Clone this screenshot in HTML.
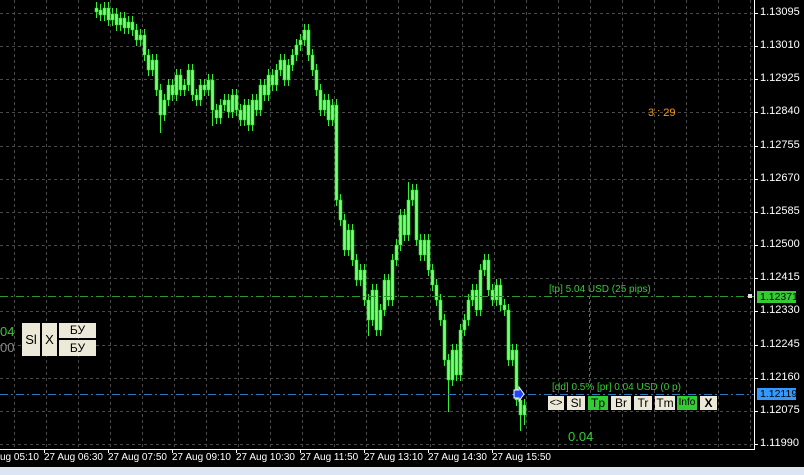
<!DOCTYPE html>
<html><head><meta charset="utf-8"><style>
html,body{margin:0;padding:0;background:#000;width:804px;height:475px;overflow:hidden;font-family:"Liberation Sans","DejaVu Sans",sans-serif;}
#w{position:relative;width:804px;height:475px;}
.t{position:absolute;white-space:nowrap;}
.pl{position:absolute;left:760px;font-size:11px;color:#fff;}
.tl{position:absolute;top:452px;color:#fff;font-size:10px;white-space:nowrap;}
.btn{position:absolute;background:#ece9d8;color:#000;font-size:11px;text-align:center;line-height:14px;height:14px;}
</style></head><body><div id="w">
<svg width="804" height="475" style="position:absolute;left:0;top:0">
<path stroke="#4a4a4a" stroke-dasharray="3,3" fill="none" d="M14.5 0V449M46.5 0V449M78.5 0V449M110.5 0V449M142.5 0V449M174.5 0V449M206.5 0V449M238.5 0V449M270.5 0V449M302.5 0V449M334.5 0V449M366.5 0V449M398.5 0V449M430.5 0V449M462.5 0V449M494.5 0V449M526.5 0V449M558.5 0V449M590.5 0V449M622.5 0V449M654.5 0V449M686.5 0V449M718.5 0V449M750.5 0V449
M0 13.5H754M0 46.5H754M0 79.5H754M0 112.5H754M0 146.5H754M0 179.5H754M0 212.5H754M0 245.5H754M0 278.5H754M0 311.5H754M0 345.5H754M0 378.5H754M0 411.5H754M0 444.5H754"/>
<path stroke="#fff" d="M754 13.5h4M754 46.5h4M754 79.5h4M754 112.5h4M754 146.5h4M754 179.5h4M754 212.5h4M754 245.5h4M754 278.5h4M754 311.5h4M754 345.5h4M754 378.5h4M754 411.5h4M754 444.5h4M44.5 449v4M108.5 449v4M172.5 449v4M236.5 449v4M300.5 449v4M364.5 449v4M428.5 449v4M492.5 449v4"/>
<path stroke="#33ee33" fill="none" d="M96.5 2V18M100.5 4V21M104.5 2V21M108.5 2V26M112.5 8V26M116.5 8V31M120.5 12V31M124.5 12V34M128.5 16V34M132.5 16V36M136.5 24V46M140.5 29V46M144.5 29V61M148.5 49V76M152.5 54V76M156.5 54V96M160.5 84V133M164.5 94V121M168.5 79V106M172.5 79V101M176.5 69V101M180.5 69V96M184.5 79V96M188.5 64V91M192.5 64V101M196.5 89V106M200.5 79V106M204.5 79V96M208.5 74V96M212.5 74V126M216.5 104V124M220.5 99V124M224.5 94V111M228.5 94V118M232.5 89V118M236.5 89V116M240.5 104V126M244.5 99V126M248.5 99V131M252.5 94V131M256.5 94V116M260.5 79V116M264.5 79V101M268.5 69V101M272.5 69V91M276.5 64V91M280.5 54V76M284.5 54V86M288.5 59V86M292.5 49V71M296.5 39V61M300.5 34V51M304.5 24V46M308.5 24V61M312.5 49V76M316.5 64V96M320.5 84V116M324.5 94V116M328.5 94V126M332.5 99V126M336.5 99V206M340.5 194V226M344.5 214V256M348.5 224V256M352.5 224V266M356.5 254V286M360.5 264V286M364.5 264V306M368.5 294V336M372.5 284V326M376.5 284V336M380.5 304V336M384.5 274V316M388.5 274V306M392.5 254V306M396.5 239V266M400.5 209V251M404.5 209V241M408.5 182V241M412.5 184V206M416.5 184V246M420.5 234V261M424.5 234V261M428.5 234V276M432.5 264V291M436.5 279V306M440.5 294V326M444.5 314V366M448.5 354V412M452.5 344V386M456.5 344V381M460.5 324V381M464.5 314V336M468.5 294V326M472.5 284V306M476.5 284V316M480.5 264V316M484.5 254V276M488.5 254V296M492.5 284V306M496.5 279V306M500.5 279V311M504.5 299V316M508.5 304V366M512.5 344V366M516.5 344V406M520.5 394V431M524.5 399V425"/>
<path fill="#77ff77" stroke="#22dd22" stroke-width="0.6" d="M95 8h3V12h-3ZM99 10h3V15h-3ZM103 8h3V15h-3ZM107 8h3V20h-3ZM111 14h3V20h-3ZM115 14h3V25h-3ZM119 18h3V25h-3ZM123 18h3V28h-3ZM127 22h3V28h-3ZM131 22h3V30h-3ZM135 30h3V40h-3ZM139 35h3V40h-3ZM143 35h3V55h-3ZM147 55h3V70h-3ZM151 60h3V70h-3ZM155 60h3V90h-3ZM159 90h3V115h-3ZM163 100h3V115h-3ZM167 85h3V100h-3ZM171 85h3V95h-3ZM175 75h3V95h-3ZM179 75h3V90h-3ZM183 85h3V90h-3ZM187 70h3V85h-3ZM191 70h3V95h-3ZM195 95h3V100h-3ZM199 85h3V100h-3ZM203 85h3V90h-3ZM207 80h3V90h-3ZM211 80h3V110h-3ZM215 110h3V118h-3ZM219 105h3V118h-3ZM223 100h3V105h-3ZM227 100h3V112h-3ZM231 95h3V112h-3ZM235 95h3V110h-3ZM239 110h3V120h-3ZM243 105h3V120h-3ZM247 105h3V125h-3ZM251 100h3V125h-3ZM255 100h3V110h-3ZM259 85h3V110h-3ZM263 85h3V95h-3ZM267 75h3V95h-3ZM271 75h3V85h-3ZM275 70h3V85h-3ZM279 60h3V70h-3ZM283 60h3V80h-3ZM287 65h3V80h-3ZM291 55h3V65h-3ZM295 45h3V55h-3ZM299 40h3V45h-3ZM303 30h3V40h-3ZM307 30h3V55h-3ZM311 55h3V70h-3ZM315 70h3V90h-3ZM319 90h3V110h-3ZM323 100h3V110h-3ZM327 100h3V120h-3ZM331 105h3V120h-3ZM335 105h3V200h-3ZM339 200h3V220h-3ZM343 220h3V250h-3ZM347 230h3V250h-3ZM351 230h3V260h-3ZM355 260h3V280h-3ZM359 270h3V280h-3ZM363 270h3V300h-3ZM367 300h3V320h-3ZM371 290h3V320h-3ZM375 290h3V330h-3ZM379 310h3V330h-3ZM383 280h3V310h-3ZM387 280h3V300h-3ZM391 260h3V300h-3ZM395 245h3V260h-3ZM399 215h3V245h-3ZM403 215h3V235h-3ZM407 200h3V235h-3ZM411 190h3V200h-3ZM415 190h3V240h-3ZM419 240h3V255h-3ZM423 240h3V255h-3ZM427 240h3V270h-3ZM431 270h3V285h-3ZM435 285h3V300h-3ZM439 300h3V320h-3ZM443 320h3V360h-3ZM447 360h3V380h-3ZM451 350h3V380h-3ZM455 350h3V375h-3ZM459 330h3V375h-3ZM463 320h3V330h-3ZM467 300h3V320h-3ZM471 290h3V300h-3ZM475 290h3V310h-3ZM479 270h3V310h-3ZM483 260h3V270h-3ZM487 260h3V290h-3ZM491 290h3V300h-3ZM495 285h3V300h-3ZM499 285h3V305h-3ZM503 305h3V310h-3ZM507 310h3V360h-3ZM511 350h3V360h-3ZM515 350h3V400h-3ZM519 400h3V415h-3ZM523 405h3V415h-3Z"/>
<line x1="0" y1="296.5" x2="754" y2="296.5" stroke="#2a9a2a" stroke-dasharray="8,3,2,3"/>
<line x1="0" y1="394.5" x2="754" y2="394.5" stroke="#2a7ac0" stroke-dasharray="8,3,2,3"/>
<line x1="589.5" y1="296" x2="589.5" y2="386" stroke="#2a9a2a" stroke-dasharray="3,3"/>
<rect x="748" y="294" width="4" height="4" fill="#ddd"/>
<path d="M514 390 L519 390 L519 387 L524 394 L519 401 L519 398 L514 398 Z" fill="#2244ff" stroke="#fff" stroke-width="1"/>
<line x1="754.5" y1="0" x2="754.5" y2="449" stroke="#fff"/><line x1="0" y1="449.5" x2="755" y2="449.5" stroke="#fff"/>
</svg>
<div class="pl" style="top:6px">1.13095</div><div class="pl" style="top:39px">1.13010</div><div class="pl" style="top:72px">1.12925</div><div class="pl" style="top:105px">1.12840</div><div class="pl" style="top:139px">1.12755</div><div class="pl" style="top:172px">1.12670</div><div class="pl" style="top:205px">1.12585</div><div class="pl" style="top:238px">1.12500</div><div class="pl" style="top:271px">1.12415</div><div class="pl" style="top:304px">1.12330</div><div class="pl" style="top:338px">1.12245</div><div class="pl" style="top:371px">1.12160</div><div class="pl" style="top:404px">1.12075</div><div class="pl" style="top:437px">1.11990</div>
<div class="tl" style="left:0">ug 05:10</div><div class="tl" style="left:44px">27 Aug 06:30</div><div class="tl" style="left:108px">27 Aug 07:50</div><div class="tl" style="left:172px">27 Aug 09:10</div><div class="tl" style="left:236px">27 Aug 10:30</div><div class="tl" style="left:300px">27 Aug 11:50</div><div class="tl" style="left:364px">27 Aug 13:10</div><div class="tl" style="left:428px">27 Aug 14:30</div><div class="tl" style="left:492px">27 Aug 15:50</div>
<div class="t" style="left:648px;top:107px;color:#f90;font-size:11px;">3 : 29</div>
<div class="t" style="left:549px;top:284px;color:#3c3;font-size:10px;">[tp] 5.04 USD (25 pips)</div>
<div class="t" style="left:552px;top:382px;color:#3c3;font-size:10px;">[dd] 0.5% [pr] 0.04 USD (0 p)</div>
<div class="t" style="left:568px;top:429px;color:#3c3;font-size:13px;">0.04</div>
<div class="t" style="left:0px;top:324px;color:#3c3;font-size:13px;">04</div>
<div class="t" style="left:0px;top:340px;color:#888;font-size:13px;">00</div>
<div class="btn" style="left:22px;top:323px;width:18px;height:33px;line-height:33px;font-size:13px;">Sl</div>
<div class="btn" style="left:42px;top:323px;width:15px;height:33px;line-height:33px;font-size:13px;">X</div>
<div class="btn" style="left:59px;top:323px;width:37px;height:15px;line-height:15px;font-size:12px;">БУ</div>
<div class="btn" style="left:59px;top:340px;width:37px;height:16px;line-height:16px;font-size:12px;">БУ</div>
<div class="btn" style="left:548px;top:396px;width:16px;">&lt;&gt;</div>
<div class="btn" style="left:567px;top:396px;width:18px;font-size:12px;">Sl</div>
<div class="btn" style="left:588px;top:396px;width:20px;background:#3c3;font-size:12px;">Tp</div>
<div class="btn" style="left:611px;top:396px;width:20px;font-size:12px;">Br</div>
<div class="btn" style="left:634px;top:396px;width:18px;font-size:12px;">Tr</div>
<div class="btn" style="left:655px;top:396px;width:20px;font-size:12px;">Tm</div>
<div class="btn" style="left:677px;top:396px;width:20px;background:#3c3;font-size:10px;">Info</div>
<div class="btn" style="left:700px;top:396px;width:17px;font-weight:bold;font-size:12px;">X</div>
<div class="t" style="left:757px;top:291px;width:36px;height:12px;background:#3c3;color:#000;font-size:10.5px;line-height:12px;padding-left:3px;">1.12371</div>
<div class="t" style="left:757px;top:388px;width:36px;height:12px;background:#3399ff;color:#000;font-size:10.5px;line-height:12px;padding-left:3px;">1.12119</div>
<div style="position:absolute;left:0;top:467px;width:804px;height:8px;background:#dce6f2;"></div>
</div>
</body></html>
